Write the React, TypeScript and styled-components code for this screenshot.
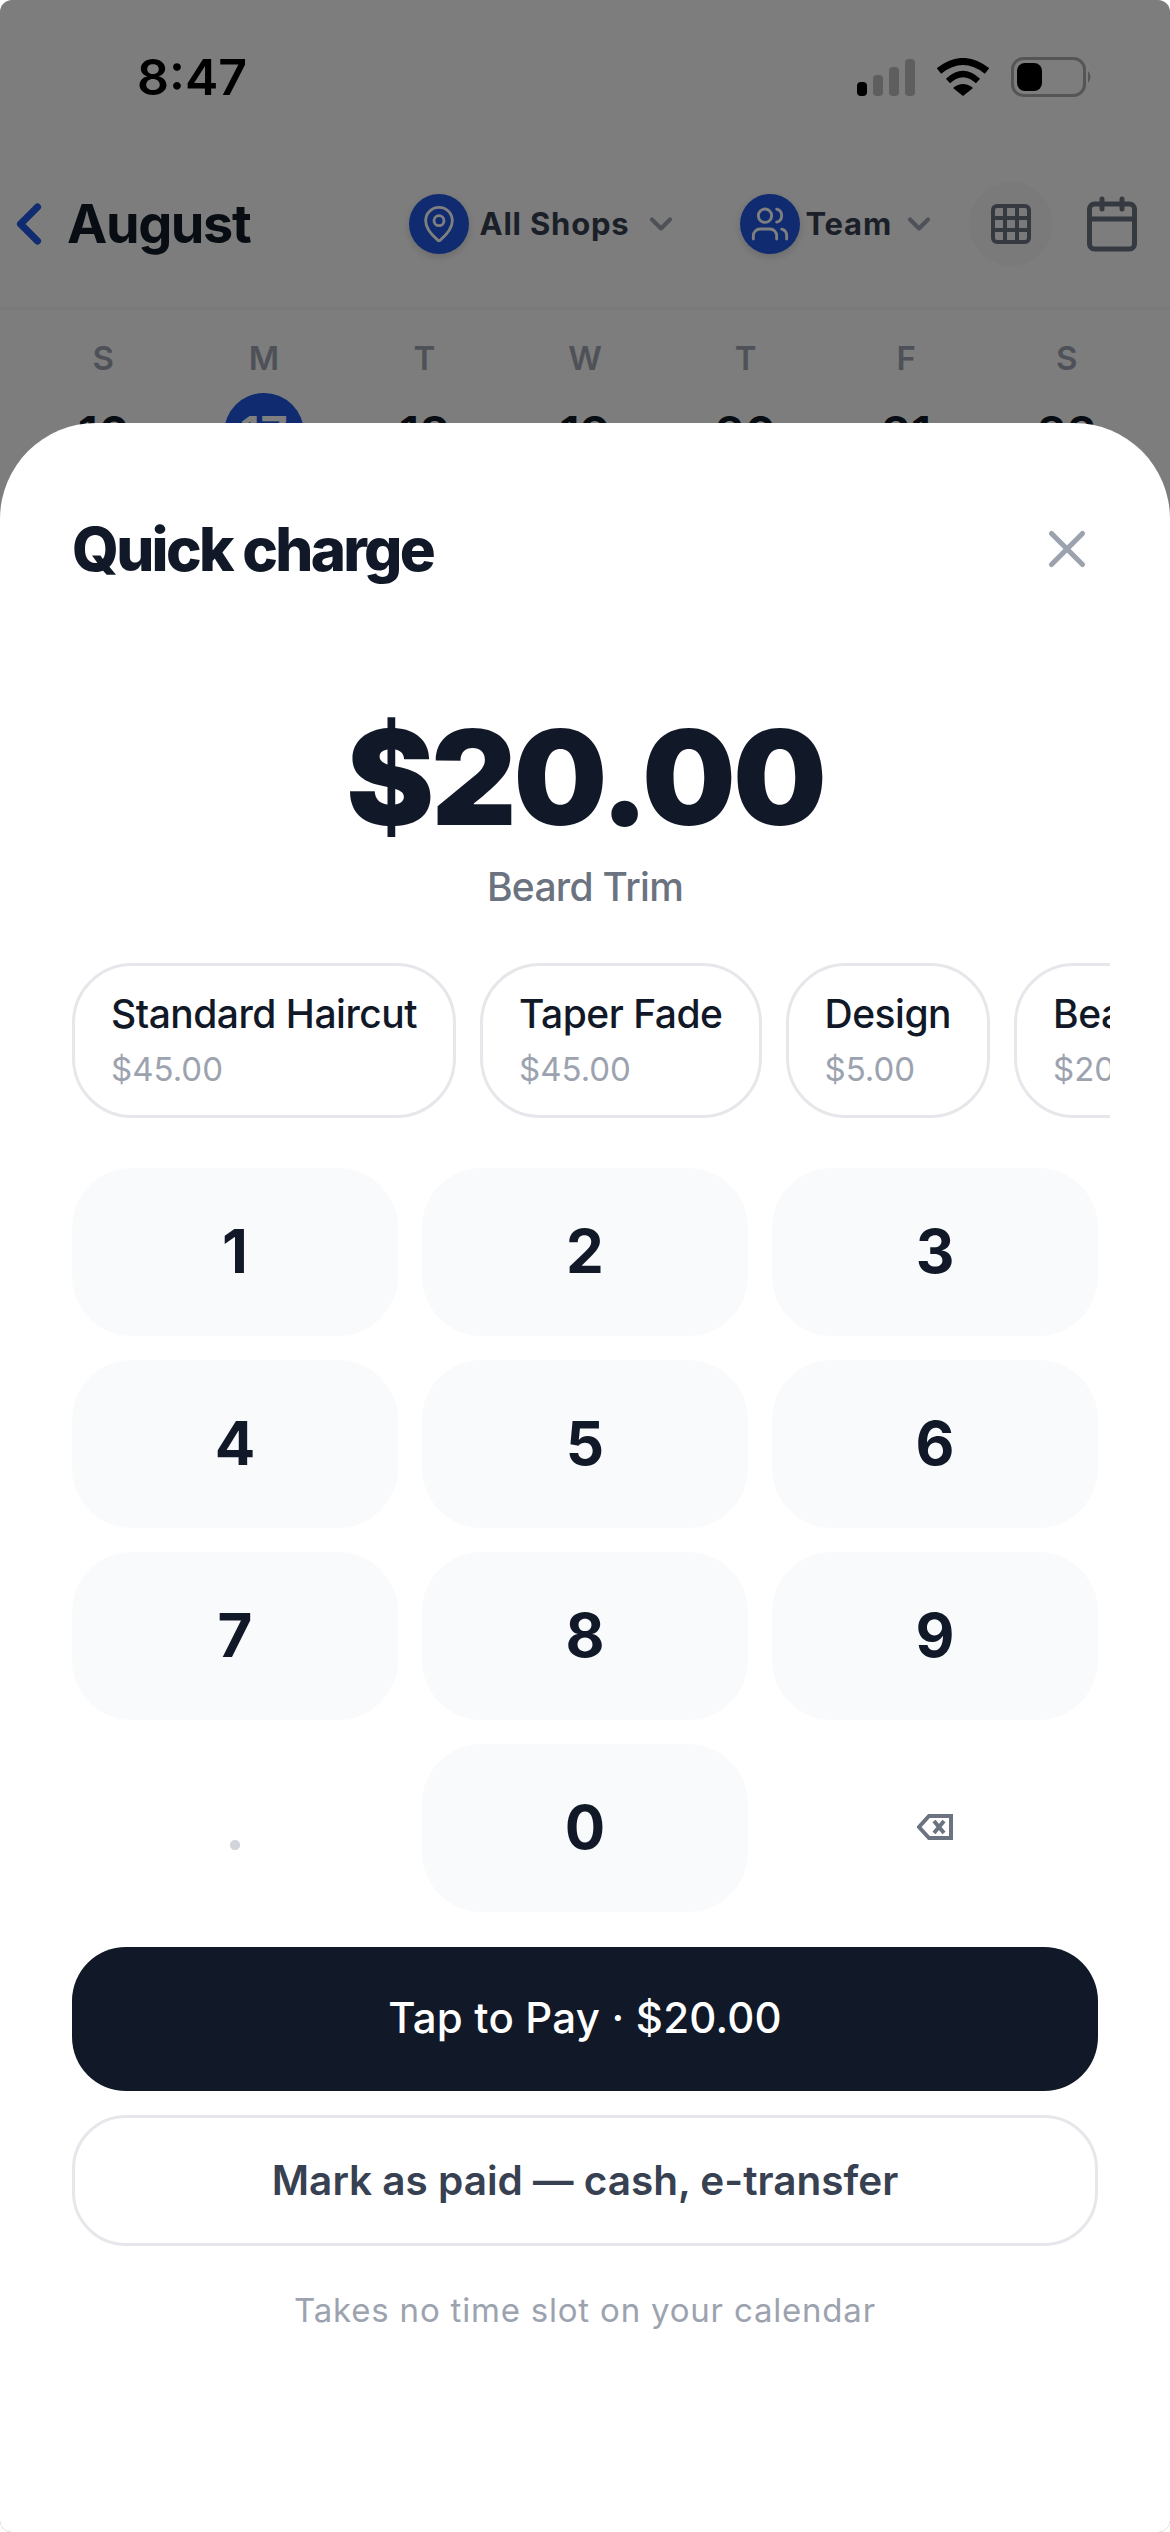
import React from 'react';
import styled, { createGlobalStyle } from 'styled-components';
import { Calendar, ChevronDown, ChevronLeft, Grid3x3, MapPin, Users, X } from 'lucide-react';

const GlobalStyle = createGlobalStyle`
    html, body {
        margin: 0;
        padding: 0;
        background: #ffffff;
    }

    * {
        box-sizing: border-box;
    }

    button {
        font-family: inherit;
    }
`

const Screen = styled.div`
    position: relative;
    width: 1170px;
    height: 2532px;
    overflow: hidden;
    background: #fafafa;
    border-radius: 12px;
    font-family: Inter, "Noto Sans", sans-serif;
    color: #111827;
`

const StatusBar = styled.div`
    display: flex;
    align-items: center;
    justify-content: space-between;
    height: 154px;
    padding: 0 77px 0 137px;
`

const Clock = styled.span`
    font-size: 50px;
    font-weight: 600;
    color: #000000;
`

const StatusIcons = styled.div`
    display: flex;
    align-items: center;
    gap: 22px;
`

const Header = styled.header`
    display: flex;
    align-items: center;
    height: 156px;
    padding: 0 28px 14px 0;
    border-bottom: 3px solid #f3f4f6;
`

const BackIcon = styled(ChevronLeft)`
    flex: none;
    margin-left: -5px;
    color: #2056e0;
`

const MonthTitle = styled.h1`
    margin: 0 auto 0 4px;
    font-size: 54px;
    font-weight: 700;
    letter-spacing: -1.4px;
    color: #111827;
`

const Pill = styled.div<{ $gap: number; $end: number }>`
    display: flex;
    align-items: center;
    gap: ${p => p.$gap}px;
    height: 100px;
    padding: 0 ${p => p.$end}px 0 23px;
    margin-right: 15px;
    border-radius: 50px;
    background: #fbfbfb;
`

const PillBadge = styled.span`
    display: flex;
    align-items: center;
    justify-content: center;
    width: 60px;
    height: 60px;
    border-radius: 50%;
    background: #2056e0;
    color: #ffffff;
    box-shadow: 0 3px 8px rgba(0, 0, 0, 0.15);
`

const PillLabel = styled.span`
    margin-right: 4px;
    font-size: 31px;
    font-weight: 700;
    letter-spacing: 0.8px;
    color: #374151;
`

const PillCaret = styled(ChevronDown)`
    color: #9ca3af;
`

const RoundButton = styled.span`
    display: flex;
    align-items: center;
    justify-content: center;
    width: 84px;
    height: 84px;
    margin-left: -2px;
    border-radius: 50%;
    background: #f5f5f5;
    color: #6b7280;
`

const CalendarButton = styled.span`
    display: flex;
    margin-left: 29px;
    color: #6b7280;
`

const WeekGrid = styled.div`
    display: grid;
    grid-template-columns: repeat(7, 1fr);
    justify-items: center;
    padding: 28px 23px 0;
`

const WeekDay = styled.span`
    height: 40px;
    font-size: 33px;
    line-height: 40px;
    font-weight: 600;
    color: #9ca3af;
`

const DayNumber = styled.span<{ $active?: boolean }>`
    display: flex;
    justify-content: center;
    align-items: center;
    width: 80px;
    height: 80px;
    margin-top: 15px;
    border-radius: 50%;
    font-size: 48px;
    font-weight: 600;
    background: ${p => (p.$active ? '#2056e0' : 'transparent')};
    color: ${p => (p.$active ? '#ffffff' : '#111827')};
`

const Scrim = styled.div`
    position: absolute;
    inset: 0;
    background: rgba(0, 0, 0, 0.5);
`

const Sheet = styled.section`
    position: absolute;
    top: 423px;
    left: 0;
    right: 0;
    bottom: 0;
    padding: 92px 72px 0;
    background: #ffffff;
    border-radius: 96px 96px 0 0;
`

const SheetHeader = styled.div`
    display: flex;
    align-items: center;
    justify-content: space-between;
    height: 68px;
`

const SheetTitle = styled.h2`
    margin: 0;
    font-size: 60px;
    line-height: 68px;
    font-weight: 800;
    letter-spacing: -2.7px;
    color: #111827;
`

const CloseIcon = styled(X)`
    color: #9ca3af;
`

const Amount = styled.div`
    margin-top: 124px;
    text-align: center;
    font-size: 132px;
    line-height: 140px;
    font-weight: 900;
    letter-spacing: -3px;
    color: #111827;
`

const AmountLabel = styled.div`
    margin-top: 16px;
    text-align: center;
    font-size: 39px;
    line-height: 48px;
    font-weight: 500;
    letter-spacing: -0.7px;
    color: #6b7280;
`

const ChipRow = styled.div`
    display: flex;
    gap: 24px;
    margin: 52px -12px 0 0;
    overflow: hidden;
`

const Chip = styled.div`
    flex: none;
    height: 155px;
    padding: 24px 36px 0;
    border: 3px solid #e5e7eb;
    border-radius: 60px;
    background: #ffffff;
`

const ChipName = styled.div`
    font-size: 39px;
    line-height: 48px;
    font-weight: 500;
    letter-spacing: -0.5px;
    color: #111827;
`

const ChipPrice = styled.div`
    margin-top: 9px;
    font-size: 33px;
    line-height: 44px;
    color: #9ca3af;
`

const Keypad = styled.div`
    display: grid;
    grid-template-columns: repeat(3, 1fr);
    grid-auto-rows: 168px;
    gap: 24px;
    margin-top: 50px;
`

const Key = styled.button<{ $plain?: boolean }>`
    display: flex;
    align-items: center;
    justify-content: center;
    padding: 0 0 2px;
    border: none;
    border-radius: 60px;
    background: ${p => (p.$plain ? 'transparent' : '#f9fafb')};
    font-size: 60px;
    font-weight: 700;
    color: ${p => (p.$plain ? '#d1d5db' : '#111827')};
`

const PayButton = styled.button`
    display: block;
    width: 100%;
    height: 144px;
    margin-top: 35px;
    padding: 0 0 4px;
    border: none;
    border-radius: 54px;
    background: #111827;
    font-size: 42px;
    font-weight: 500;
    letter-spacing: 0.2px;
    color: #ffffff;
`

const MarkPaidButton = styled.button`
    display: block;
    width: 100%;
    height: 131px;
    margin-top: 24px;
    border: 3px solid #e5e7eb;
    border-radius: 54px;
    background: #ffffff;
    font-size: 40.5px;
    font-weight: 600;
    color: #374151;
`

const Footnote = styled.p`
    margin: 42px 0 0;
    text-align: center;
    font-size: 33px;
    line-height: 44px;
    letter-spacing: 0.8px;
    color: #9ca3af;
`

const days = [
    { name: 'S', num: '16' },
    { name: 'M', num: '17', active: true },
    { name: 'T', num: '18' },
    { name: 'W', num: '19' },
    { name: 'T', num: '20' },
    { name: 'F', num: '21' },
    { name: 'S', num: '22' },
]

const services = [
    { name: 'Standard Haircut', price: '$45.00' },
    { name: 'Taper Fade', price: '$45.00' },
    { name: 'Design', price: '$5.00' },
    { name: 'Beard Trim', price: '$20.00' },
]

const SignalIcon = () => (
    <svg width="58" height="37" viewBox="0 0 58 37">
        <rect x="0" y="23" width="10" height="14" rx="4" fill="#000000" />
        <rect x="16" y="16" width="10" height="21" rx="4" fill="#bdbdbd" />
        <rect x="32" y="8" width="10" height="29" rx="4" fill="#bdbdbd" />
        <rect x="48" y="0" width="10" height="37" rx="4" fill="#bdbdbd" />
    </svg>
)

const WifiIcon = () => (
    <svg width="52" height="38" viewBox="0 0 52 38" fill="none">
        <path d="M2 13 Q26 -6 50 13" stroke="#000000" strokeWidth="7" />
        <path d="M11 23 Q26 9 41 23" stroke="#000000" strokeWidth="6" />
        <path d="M16 30 Q26 22 36 30 L26 38 Z" fill="#000000" />
    </svg>
)

const BatteryIcon = () => (
    <svg width="82" height="40" viewBox="0 0 82 40" fill="none">
        <rect x="1.5" y="1.5" width="72" height="37" rx="11" stroke="#aaaaaa" strokeWidth="3" />
        <rect x="6" y="6" width="25" height="28" rx="8" fill="#000000" />
        <path d="M77 14 Q82 20 77 26 Z" fill="#aaaaaa" />
    </svg>
)

const BackspaceIcon = () => (
    <svg width="36" height="26" viewBox="0 0 36 26" fill="none" stroke="#6b7280" strokeWidth="4">
        <path d="M12 2 H34 V24 H12 L2 13 Z" />
        <path d="M17 7 L27 19 M27 7 L17 19" />
    </svg>
)

const App: React.FunctionComponent = () => {
    return (
        <Screen>
            <GlobalStyle />
            <StatusBar>
                <Clock>8:47</Clock>
                <StatusIcons>
                    <SignalIcon />
                    <WifiIcon />
                    <BatteryIcon />
                </StatusIcons>
            </StatusBar>
            <Header>
                <BackIcon size={68} strokeWidth={2.5} />
                <MonthTitle>August</MonthTitle>
                <Pill $gap={10} $end={23}>
                    <PillBadge><MapPin size={40} strokeWidth={1.7} /></PillBadge>
                    <PillLabel>All Shops</PillLabel>
                    <PillCaret size={36} strokeWidth={2.8} />
                </Pill>
                <Pill $gap={5} $end={19}>
                    <PillBadge><Users size={40} strokeWidth={1.7} /></PillBadge>
                    <PillLabel>Team</PillLabel>
                    <PillCaret size={36} strokeWidth={2.8} />
                </Pill>
                <RoundButton><Grid3x3 size={48} strokeWidth={2} /></RoundButton>
                <CalendarButton><Calendar size={60} strokeWidth={2} /></CalendarButton>
            </Header>
            <WeekGrid>
                {days.map((d, i) => <WeekDay key={i}>{d.name}</WeekDay>)}
                {days.map(d => <DayNumber key={d.num} $active={d.active}>{d.num}</DayNumber>)}
            </WeekGrid>
            <Scrim />
            <Sheet>
                <SheetHeader>
                    <SheetTitle>Quick charge</SheetTitle>
                    <CloseIcon size={62} strokeWidth={2} />
                </SheetHeader>
                <Amount>$20.00</Amount>
                <AmountLabel>Beard Trim</AmountLabel>
                <ChipRow>
                    {services.map(s => (
                        <Chip key={s.name}>
                            <ChipName>{s.name}</ChipName>
                            <ChipPrice>{s.price}</ChipPrice>
                        </Chip>
                    ))}
                </ChipRow>
                <Keypad>
                    {['1', '2', '3', '4', '5', '6', '7', '8', '9'].map(n => <Key key={n}>{n}</Key>)}
                    <Key $plain>.</Key>
                    <Key>0</Key>
                    <Key $plain aria-label="Delete"><BackspaceIcon /></Key>
                </Keypad>
                <PayButton>Tap to Pay · $20.00</PayButton>
                <MarkPaidButton>Mark as paid — cash, e-transfer</MarkPaidButton>
                <Footnote>Takes no time slot on your calendar</Footnote>
            </Sheet>
        </Screen>
    )
}

export default App;
